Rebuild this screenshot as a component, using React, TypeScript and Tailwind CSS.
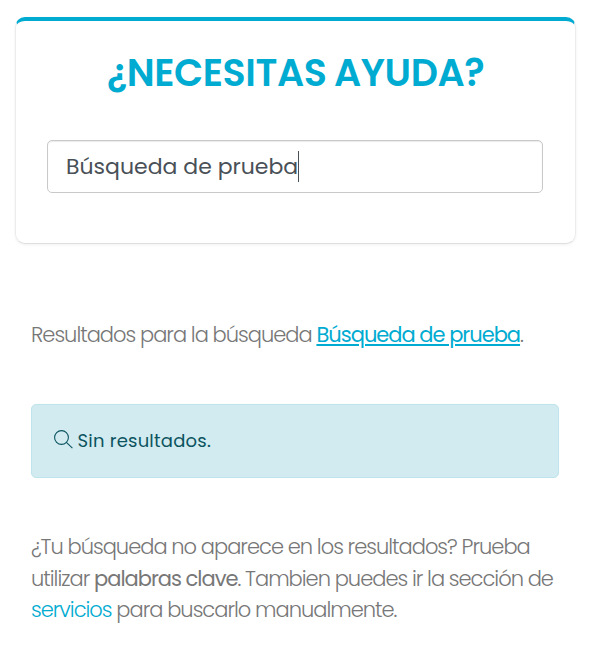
export default function App() {
  return (
    <main className="min-h-[646px] w-[590px] bg-white px-[15px] pt-[17px] font-[Poppins,Inter,sans-serif]">
      <section className="h-[227px] w-[561px] rounded-[10px] border border-t-4 border-[#ececec] border-t-[#00abd1] border-b-[#dfdfdf] px-[31px] shadow-[0_1px_3px_rgba(0,0,0,0.06)]">
        <h1 className="pt-[29px] text-center text-[38px] leading-[46px] font-semibold whitespace-nowrap text-[#00abd1]">
          <span className="tracking-[-0.42px] [word-spacing:-1px]">¿NECESITAS AYUDA?</span>
        </h1>
        <div className="mt-[44px] flex h-[53px] w-[496px] items-center rounded-[5px] border border-[#c9c9c9] pl-[18px] text-[22px] whitespace-nowrap text-[#495057] shadow-[inset_0_1px_1px_rgba(0,0,0,0.08)]">
          <span>Búsqueda de prueba</span>
          <span className="h-[31px] w-px bg-[#495057]" />
        </div>
      </section>

      <div className="px-4 pt-[75px]">
        <p className="text-[21px] leading-8 font-light tracking-[-1px] whitespace-nowrap text-[#777]">
          Resultados para la búsqueda{' '}
          <a href="#" className="font-normal text-[#00abd1] underline decoration-2 underline-offset-2">Búsqueda de prueba</a>.
        </p>

        <div className="mt-[53px] flex h-[74px] w-[528px] items-center rounded-[5px] border border-[#bee5eb] bg-[#d1ebf0] pl-[22px] text-[18px] text-[#0c5460]">
          <svg className="mb-1 h-[19px] w-[19px]" viewBox="0 0 19 19" fill="none" stroke="currentColor" strokeWidth="1.1">
            <circle cx="7.5" cy="7.5" r="6.9" />
            <path d="M12.4 12.4 18.4 18.2" />
          </svg>
          <span className="mb-0.5 ml-[4.5px] tracking-[0.22px]">Sin resultados.</span>
        </div>

        <p className="mt-[53px] text-[21px] leading-[31.5px] font-light tracking-[-1px] whitespace-nowrap text-[#777]">
          ¿Tu búsqueda no aparece en los resultados? Prueba
          <br />
          utilizar <strong className="font-normal">palabras clave</strong>. Tambien puedes ir la sección de
          <br />
          <a href="#" className="text-[#00abd1]">servicios</a> para buscarlo manualmente.
        </p>
      </div>
    </main>
  );
}
